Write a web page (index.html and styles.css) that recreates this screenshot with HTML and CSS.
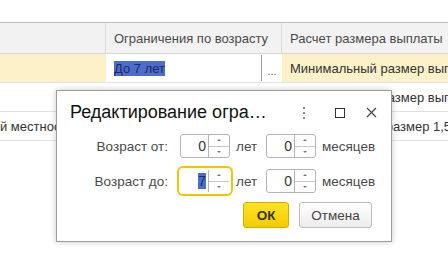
FILE: index.html
```html
<!DOCTYPE html>
<html lang="ru">

<head>
    <meta charset="UTF-8" />
    <title>Ограничения по возрасту</title>
    <link rel="stylesheet" href="styles.css">
</head>

<body>
    <div class="table">
        <div class="head-cell"></div>
        <div class="head-cell">Ограничения по возрасту</div>
        <div class="head-cell last">Расчет размера выплаты</div>

        <div class="cell yellow"></div>
        <div class="cell edit-cell">
            <span class="selected">До 7 лет</span>
            <span class="choice">...</span>
        </div>
        <div class="cell yellow">Минимальный размер выплаты</div>

        <div class="cell"></div>
        <div class="cell"></div>
        <div class="cell">Минимальный размер выплаты</div>

        <div class="cell flush">й местности</div>
        <div class="cell"></div>
        <div class="cell">Максимальный размер 1,5</div>
    </div>

    <div class="dialog">
        <div class="dialog-title">
            <span class="title-text">Редактирование огра…</span>
            <span class="title-buttons">
                <svg width="4" height="12" viewBox="0 0 4 12">
                    <rect x="1" y="0" width="2" height="2" fill="#8a8a8a" />
                    <rect x="1" y="5" width="2" height="2" fill="#8a8a8a" />
                    <rect x="1" y="10" width="2" height="2" fill="#8a8a8a" />
                </svg>
                <svg width="10" height="10" viewBox="0 0 10 10">
                    <rect x="0.5" y="0.5" width="9" height="9" fill="none" stroke="#333" />
                </svg>
                <svg width="11" height="11" viewBox="0 0 11 11">
                    <path d="M1 1 L10 10 M10 1 L1 10" stroke="#444" stroke-width="1.2" />
                </svg>
            </span>
        </div>

        <div class="form">
            <label class="form-label">Возраст от:</label>
            <div class="spin"><span class="spin-value">0</span><span class="spin-arrows"><i class="up"></i><i class="down"></i></span></div>
            <span class="unit">лет</span>
            <div class="spin"><span class="spin-value">0</span><span class="spin-arrows"><i class="up"></i><i class="down"></i></span></div>
            <span class="unit">месяцев</span>

            <label class="form-label">Возраст до:</label>
            <div class="spin focused"><span class="spin-value"><span class="mark">7</span></span><span class="spin-arrows"><i class="up"></i><i class="down"></i></span></div>
            <span class="unit">лет</span>
            <div class="spin"><span class="spin-value">0</span><span class="spin-arrows"><i class="up"></i><i class="down"></i></span></div>
            <span class="unit">месяцев</span>
        </div>

        <div class="buttons">
            <button type="button" class="btn-ok">ОК</button>
            <button type="button" class="btn-cancel">Отмена</button>
        </div>
    </div>
</body>

</html>
```

FILE: styles.css
```css
body {
    font-family: "Liberation Sans", Arial, sans-serif;
    font-size: 13px;
    color: #333;
    background: #fff;
    margin: 0;
    width: 448px;
    height: 255px;
    overflow: hidden;
    position: relative;
}

.table {
    display: grid;
    grid-template-columns: 106px 176px 1fr;
    margin-top: 22px;
    border-top: 1px solid #bdbdbd;
}

.head-cell {
    height: 30px;
    background: #f2f2f2;
    border-right: 1px solid #dadada;
    border-bottom: 1px solid #d6d6d6;
    color: #4a4a4a;
    display: flex;
    align-items: center;
    padding-left: 8px;
    white-space: nowrap;
    overflow: hidden;
}

.head-cell.last {
    border-right: none;
}

.cell {
    height: 28px;
    border-bottom: 1px solid #e2e2e2;
    display: flex;
    align-items: center;
    padding-left: 8px;
    white-space: nowrap;
    overflow: hidden;
}

.cell.flush {
    padding-left: 0;
}

.yellow {
    background: #fcf1c8;
}

.edit-cell {
    padding-right: 0;
}

.selected {
    background: #4d6dcc;
    color: #1d2a5c;
    line-height: 15px;
}

.choice {
    margin-left: auto;
    width: 21px;
    height: 26px;
    border-left: 1px solid #a0a0a0;
    color: #666;
    font-size: 11px;
    display: flex;
    align-items: flex-end;
    justify-content: center;
    padding-bottom: 4px;
    box-sizing: border-box;
}

.dialog {
    position: absolute;
    left: 56px;
    top: 90px;
    width: 334px;
    height: 150px;
    background: #fff;
    border: 1px solid #9c9c9c;
    box-shadow: 0 0 6px rgba(0, 0, 0, 0.22);
}

.dialog-title {
    height: 43px;
    display: flex;
    align-items: center;
    padding: 0 14px 0 13px;
}

.title-text {
    font-size: 18px;
    color: #111;
    white-space: nowrap;
}

.title-buttons {
    margin-left: auto;
    display: flex;
    align-items: center;
    gap: 0;
}

.title-buttons svg:nth-child(1) {
    margin-right: 29px;
}

.title-buttons svg:nth-child(2) {
    margin-right: 21px;
}

.form {
    display: grid;
    grid-template-columns: 123px 50px 36px 50px auto;
    grid-auto-rows: 24px;
    row-gap: 11px;
    align-items: center;
}

.form-label {
    text-align: right;
    padding-right: 12px;
    color: #4a4a4a;
    font-size: 13.5px;
}

.unit {
    padding-left: 6px;
    color: #4a4a4a;
    font-size: 13.5px;
}

.spin {
    height: 24px;
    border: 1px solid #b4b4b4;
    border-radius: 3px;
    box-sizing: border-box;
    display: flex;
    background: #fff;
}

.spin.focused {
    border-color: #fff;
    outline: 2px solid #f5c400;
    outline-offset: 1px;
}

.spin-value {
    flex: 1;
    text-align: right;
    padding-right: 2px;
    line-height: 22px;
    font-size: 14px;
    color: #333;
}

.mark {
    background: #4d6dcc;
    color: #1d2a5c;
}

.spin-arrows {
    width: 20px;
    border-left: 1px solid #b4b4b4;
    display: flex;
    flex-direction: column;
}

.spin-arrows i {
    flex: 1;
    display: flex;
    align-items: center;
    justify-content: center;
}

.spin-arrows i.up {
    border-bottom: 1px solid #c8c8c8;
}

.spin-arrows i::after {
    content: "";
    border-left: 2px solid transparent;
    border-right: 2px solid transparent;
}

.spin-arrows i.up::after {
    border-bottom: 2px solid #777;
}

.spin-arrows i.down::after {
    border-top: 2px solid #777;
}

.buttons {
    display: flex;
    justify-content: flex-end;
    gap: 10px;
    padding-right: 19px;
    margin-top: 9px;
}

.buttons button {
    height: 26px;
    border-radius: 3px;
    font-family: "Liberation Sans", Arial, sans-serif;
    font-size: 13.5px;
    cursor: pointer;
}

.btn-ok {
    width: 46px;
    background: linear-gradient(#ffe325, #f3cb00);
    border: 1px solid #d4ad00;
    color: #333;
    font-weight: bold;
}

.btn-cancel {
    width: 73px;
    background: linear-gradient(#ffffff, #ececec);
    border: 1px solid #bdbdbd;
    color: #444;
}
```
